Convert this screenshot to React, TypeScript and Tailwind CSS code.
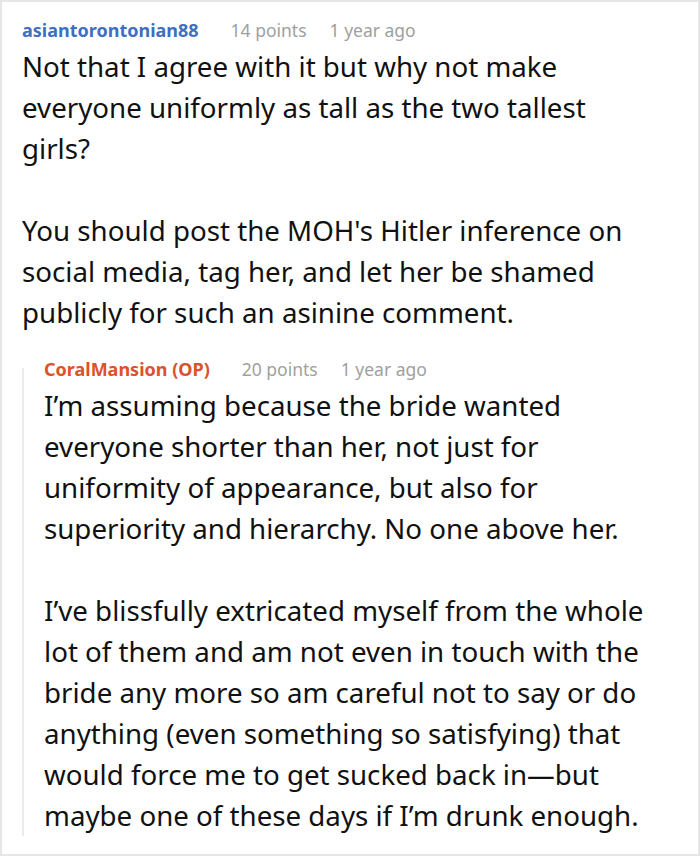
const font = { fontFamily: '"Noto Sans", "Open Sans", sans-serif' };

function Meta({ name, color, points }: { name: string; color: string; points: number }) {
  return (
    <div className="flex items-baseline leading-[24px]">
      <span className={`text-[18px] font-bold ${color}`}>{name}</span>
      <span className="ml-[32px] text-[17.5px] text-[#a0a0a0]">{points} points</span>
      <span className="ml-[23px] text-[17.5px] text-[#a0a0a0]">1 year ago</span>
    </div>
  );
}

export default function App() {
  return (
    <div
      className="w-[700px] border-2 border-[#e6e6e6] bg-white pl-[20px] pr-[46px] pt-[16px] pb-[18px] text-[#111]"
      style={font}
    >
      <Meta name="asiantorontonian88" color="text-[#3f6fc0]" points={14} />
      <div className="mt-[4px] text-[27.7px] leading-[41px]">
        <p>Not that I agree with it but why not make everyone uniformly as tall as the two tallest girls?</p>
        <p className="mt-[41px]">
          You should post the MOH's Hitler inference on social media, tag her, and let her be shamed publicly for
          such an asinine comment.
        </p>
      </div>

      <div className="mt-[24px] flex">
        <div className="mt-[11px] w-[2px] shrink-0 bg-[#ebebeb]" />
        <div className="ml-[20px] flex-1">
          <Meta name="CoralMansion (OP)" color="text-[#dc522b]" points={20} />
          <div className="mt-[4px] text-[27.7px] leading-[41px]">
            <p>
              I’m assuming because the bride wanted everyone shorter than her, not just for uniformity of appearance,
              but also for superiority and hierarchy. No one above her.
            </p>
            <p className="mt-[41px]">
              I’ve blissfully extricated myself from the whole lot of them and am not even in touch with the bride any
              more so am careful not to say or do anything (even something so satisfying) that would force me to get
              sucked back in—but maybe one of these days if I’m drunk enough.
            </p>
          </div>
        </div>
      </div>
    </div>
  );
}
